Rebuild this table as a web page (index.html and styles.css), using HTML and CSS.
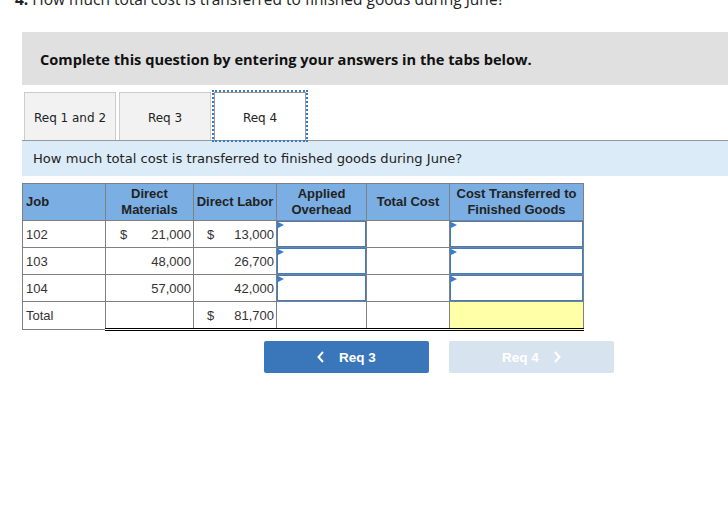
FILE: index.html
```html
<!DOCTYPE html>
<html>
<head>
<meta charset="utf-8">
<link rel="stylesheet" href="styles.css">
</head>
<body>
<div class="q-title"><b>4.</b> How much total cost is transferred to finished goods during June?</div>
<div class="panel">Complete this question by entering your answers in the tabs below.</div>
<div class="tabs">
  <div class="tab">Req 1 and 2</div>
  <div class="tab">Req 3</div>
  <div class="tab active">Req 4</div>
</div>
<div class="question">How much total cost is transferred to finished goods during June?</div>
<table class="grid">
  <colgroup>
    <col class="c1"><col class="c2"><col class="c3"><col class="c4"><col class="c5"><col class="c6">
  </colgroup>
  <thead>
    <tr>
      <th class="left">Job</th>
      <th>Direct<br>Materials</th>
      <th>Direct Labor</th>
      <th>Applied<br>Overhead</th>
      <th>Total Cost</th>
      <th>Cost Transferred to<br>Finished Goods</th>
    </tr>
  </thead>
  <tbody>
    <tr>
      <td class="job">102</td>
      <td><div class="money"><span>$</span><span>21,000</span></div></td>
      <td><div class="money dl"><span>$</span><span>13,000</span></div></td>
      <td class="in"><div class="input"></div></td>
      <td></td>
      <td class="in"><div class="input"></div></td>
    </tr>
    <tr>
      <td class="job">103</td>
      <td><div class="money"><span></span><span>48,000</span></div></td>
      <td><div class="money dl"><span></span><span>26,700</span></div></td>
      <td class="in"><div class="input"></div></td>
      <td></td>
      <td class="in"><div class="input"></div></td>
    </tr>
    <tr>
      <td class="job">104</td>
      <td><div class="money"><span></span><span>57,000</span></div></td>
      <td><div class="money dl"><span></span><span>42,000</span></div></td>
      <td class="in"><div class="input"></div></td>
      <td></td>
      <td class="in"><div class="input"></div></td>
    </tr>
    <tr class="total">
      <td class="job">Total</td>
      <td class="t"></td>
      <td class="t"><div class="money dl"><span>$</span><span>81,700</span></div></td>
      <td class="t"></td>
      <td class="t"></td>
      <td class="t yellow"></td>
    </tr>
  </tbody>
</table>
<div class="nav">
  <div class="btn prev"><svg width="8" height="12" viewBox="0 0 8 12"><polyline points="6,1 1.5,6 6,11" fill="none" stroke="#fff" stroke-width="2"/></svg><span>Req 3</span></div>
  <div class="btn next"><span>Req 4</span><svg width="8" height="12" viewBox="0 0 8 12"><polyline points="2,1 6.5,6 2,11" fill="none" stroke="#fff" stroke-width="2"/></svg></div>
</div>
</body>
</html>
```
FILE: styles.css
```css
html, body {
  margin: 0;
  padding: 0;
  overflow: hidden;
  background: #fff;
}
body {
  font-family: "Liberation Sans", Arial, sans-serif;
  color: #222;
}
.q-title {
  margin: -10px 0 0 15px;
  font-family: "Open Sans", "Liberation Sans", sans-serif;
  font-size: 15.5px;
  line-height: 18px;
  color: #222;
  white-space: nowrap;
}
.panel {
  margin: 24px 0 0 22px;
  height: 53px;
  background: #e0e0e0;
  padding-left: 18px;
  display: flex;
  align-items: center;
  font-family: "Open Sans", "Liberation Sans", sans-serif;
  font-weight: bold;
  font-size: 14.6px;
  color: #111;
  white-space: nowrap;
}
.tabs {
  margin-left: 22px;
  padding: 7px 0 0 2px;
  display: flex;
  gap: 3px;
  border-bottom: 1px solid #999;
}
.tab {
  width: 90px;
  height: 45px;
  border: 1px solid #ccc;
  border-bottom: none;
  background: #f2f2f2;
  font-family: "DejaVu Sans", Verdana, sans-serif;
  font-size: 12px;
  color: #222;
  display: flex;
  align-items: center;
  justify-content: center;
  padding-top: 2px;
}
.tab.active {
  background: #fff;
  border-color: #999;
  outline: 2px dotted #3a78c8;
  outline-offset: 0;
}
.question {
  margin-left: 22px;
  height: 35px;
  background: #dcebf8;
  padding-left: 11px;
  display: flex;
  align-items: center;
  font-family: "DejaVu Sans", Verdana, sans-serif;
  font-size: 13.1px;
  color: #222;
  white-space: nowrap;
}
.grid {
  margin: 7px 0 0 22px;
  border-collapse: collapse;
  table-layout: fixed;
  width: 561px;
  font-size: 13px;
}
.c1 { width: 83px; }
.c2 { width: 88px; }
.c3 { width: 83px; }
.c4 { width: 90px; }
.c5 { width: 83px; }
.c6 { width: 134px; }
.grid th {
  background: #7bafe4;
  border: 1px solid #808080;
  height: 36px;
  padding: 0 1px;
  font-weight: bold;
  font-size: 13px;
  line-height: 16px;
  color: #222;
  text-align: center;
}
.grid th.left {
  text-align: left;
  padding-left: 3px;
}
.grid td {
  border: 1px solid #808080;
  height: 26px;
  padding: 0;
  color: #333;
}
.grid td.job {
  padding-left: 3px;
}
.money {
  display: flex;
  justify-content: space-between;
  padding: 0 2px 0 14px;
}
.money.dl {
  padding-left: 13px;
}
.grid td.in {
  padding: 0;
  position: relative;
}
.input {
  height: 24px;
  border: 1px solid #3d7cc9;
  background: #fff;
  position: relative;
}
.input::before {
  content: "";
  position: absolute;
  left: 0;
  top: 0;
  border-top: 3px solid transparent;
  border-bottom: 3px solid transparent;
  border-left: 6px solid #3d7cc9;
}
.grid tr.total td {
  height: 26px;
}
.grid tr.total td.t {
  border-top: 1px solid #000;
  border-bottom: 3px double #000;
}
.grid td.yellow {
  background: #ffffa8;
}
.nav {
  margin: 10px 0 0 264px;
  display: flex;
  gap: 20px;
}
.btn {
  width: 165px;
  height: 32px;
  border-radius: 2px;
  display: flex;
  align-items: center;
  justify-content: center;
  gap: 14px;
  color: #fff;
  font-weight: bold;
  font-size: 13.5px;
}
.btn.prev {
  background: #3a76ba;
}
.btn.next {
  background: #d8e3f0;
}
```
